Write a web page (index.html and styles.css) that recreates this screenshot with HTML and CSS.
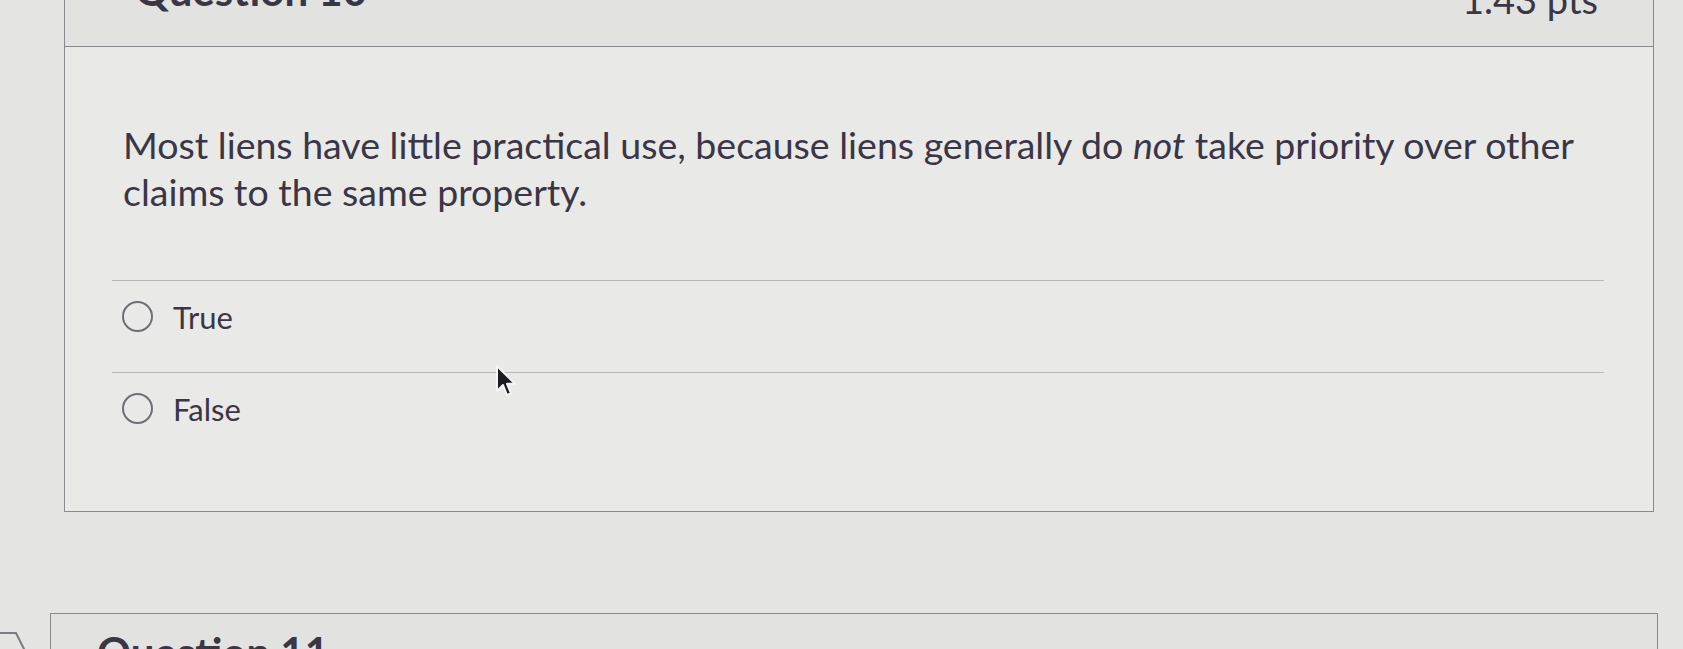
FILE: index.html
```html
<!DOCTYPE html>
<html lang="en">
<head>
    <meta charset="UTF-8">
    <meta name="viewport" content="width=device-width, initial-scale=1.0">
    <title>Quiz</title>
    <link rel="stylesheet" href="styles.css">
</head>
<body>
    <div id="quiz">
        <!-- question 10 -->
        <div class="question question_first">
            <div class="question_header">
                <span class="question_name">Question 10</span>
                <span class="question_pts">1.43 pts</span>
            </div>
            <div class="question_body">
                <div class="question_text">
                    Most liens have little practical use, because liens generally do <em>not</em> take priority over other claims to the same property.
                </div>
                <div class="answers">
                    <label class="answer">
                        <span class="radio"></span>
                        <span class="answer_text">True</span>
                    </label>
                    <label class="answer">
                        <span class="radio"></span>
                        <span class="answer_text">False</span>
                    </label>
                </div>
            </div>
        </div>
        <!-- question 11 -->
        <div class="question question_next">
            <div class="question_header">
                <span class="question_name">Question 11</span>
            </div>
        </div>
    </div>
    <svg class="flag" width="30" height="22" viewBox="0 0 30 22">
        <polyline points="0,2 16,2 26,22" fill="none" stroke="#7c7a82" stroke-width="2"/>
    </svg>
    <svg class="cursor" width="24" height="36" viewBox="0 0 24 36">
        <path d="M2 2 L2 27 L8 21 L12 31 L16 29.3 L12 19.8 L20 19.8 Z" fill="#1d1b22" stroke="#f4f4f4" stroke-width="2" stroke-linejoin="round"/>
    </svg>
</body>
</html>
```

FILE: styles.css
```css
body{
    margin: 0;
    background-color: #e4e4e2;
    font-family: "Lato", "Open Sans", sans-serif;
    color: #3a3646;
    position: relative;
    height: 649px;
    overflow: hidden;
}
#quiz{
    padding-left: 64px;
    width: 1590px;
}
.question{
    border: 1px solid #8b8990;
    background-color: #e9e9e7;
}
.question_first{
    margin-top: -40px;
    margin-bottom: 101px;
}
.question_next{
    margin-left: -14px;
    margin-right: -4px;
}
.question_header{
    display: flex;
    justify-content: space-between;
    align-items: flex-start;
    padding: 5px 55px 23px 70px;
    background-color: #e2e2e0;
    border-bottom: 1px solid #8b8990;
    font-size: 38px;
    line-height: 48px;
}
.question_next .question_header{
    padding: 14px 55px 20px 46px;
}
.question_name{
    font-weight: bold;
    font-size: 42px;
}
.question_pts{
    padding-top: 9px;
}
.question_body{
    padding: 74px 49px 47px 47px;
}
.question_text{
    padding-left: 11px;
    font-size: 37.5px;
    line-height: 47px;
}
.answers{
    margin-top: 65px;
}
.answer{
    display: flex;
    align-items: center;
    gap: 20px;
    padding: 20px 0 40px 10px;
    border-top: 1px solid #b9b7bc;
}
.radio{
    width: 27px;
    height: 27px;
    border: 2px solid #6f6d75;
    border-radius: 50%;
}
.answer_text{
    font-size: 31px;
    line-height: 30px;
}
.flag{
    position: absolute;
    left: 0;
    top: 631px;
}
.cursor{
    position: absolute;
    left: 495px;
    top: 364px;
}
```
